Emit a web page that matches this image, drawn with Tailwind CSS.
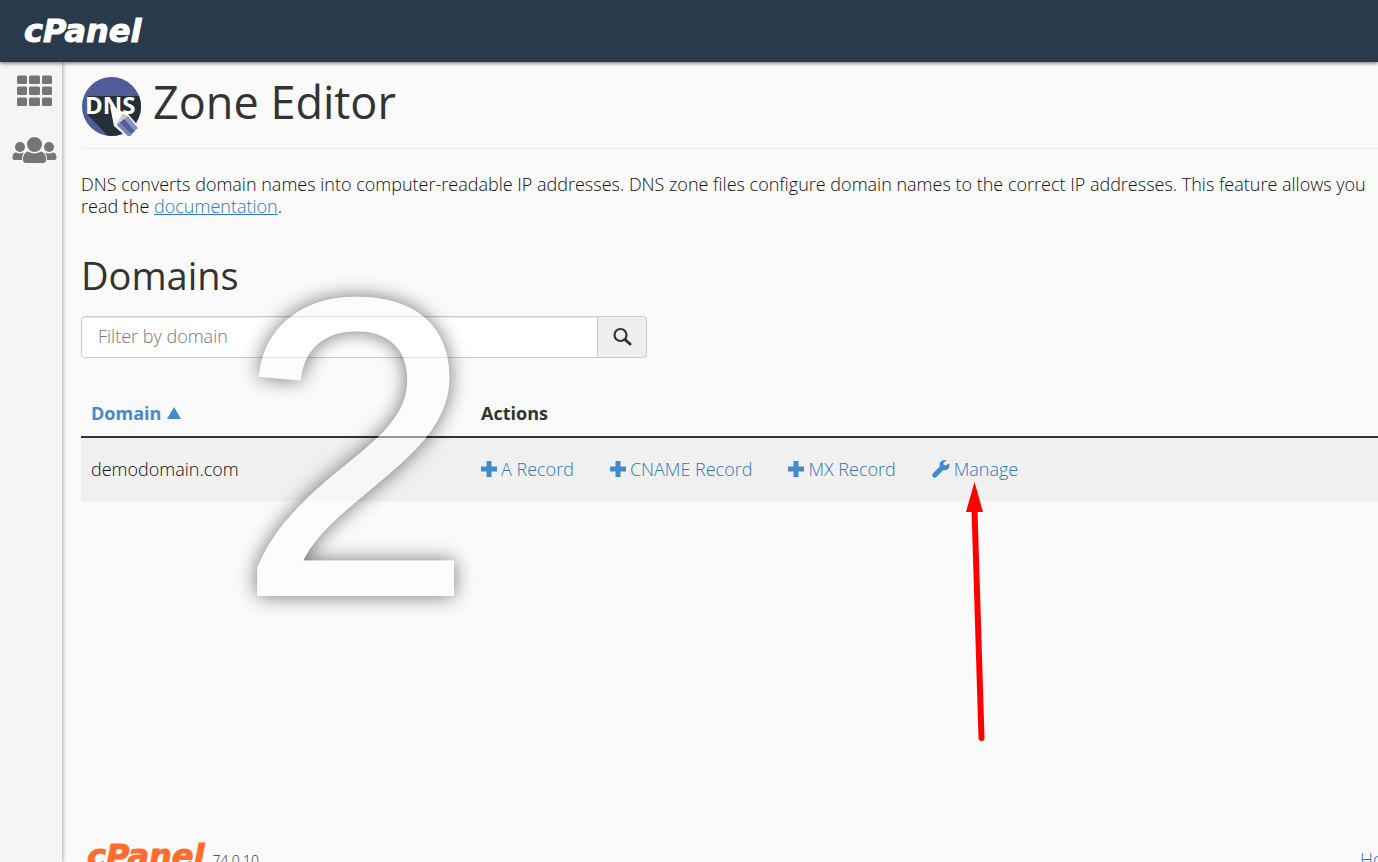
<!DOCTYPE html>
<html lang="en">
<head>
    <meta charset="UTF-8">
    <meta name="viewport" content="width=device-width, initial-scale=1.0">
    <title>cPanel - Zone Editor</title>
    <script src="https://cdn.jsdelivr.net/npm/@tailwindcss/browser@4"></script>
</head>
<body class="h-screen overflow-hidden bg-[#fafafa] text-[#111] text-[18px] leading-[22px] font-light font-['Open_Sans',sans-serif] relative flex flex-col">
    <!-- Top bar -->
    <header class="h-[62px] shrink-0 bg-[#293a4a] flex items-center px-6 shadow-[0_1px_4px_rgba(0,0,0,0.6)] z-10">
        <a href="#" class="text-white text-[32px] leading-none font-bold italic font-['DejaVu_Sans',sans-serif] [-webkit-text-stroke:1px]">cPanel</a>
    </header>

    <div class="flex grow min-h-0">
        <!-- Sidebar -->
        <nav class="w-[62px] shrink-0 bg-[#f5f5f5] shadow-[0_0_5px_rgba(0,0,0,0.45)] flex flex-col pt-3 pl-3 gap-7">
            <a href="#" aria-label="Home" class="text-[#757575]">
                <svg class="w-[45px] h-[34px]" viewBox="0 0 45 34" fill="currentColor">
                    <rect x="5" y="1.500" width="10" height="8.500" rx="1.500"/><rect x="17" y="1.500" width="11" height="8.500" rx="1.500"/><rect x="30" y="1.500" width="10" height="8.500" rx="1.500"/>
                    <rect x="5" y="12.500" width="10" height="8.500" rx="1.500"/><rect x="17" y="12.500" width="11" height="8.500" rx="1.500"/><rect x="30" y="12.500" width="10" height="8.500" rx="1.500"/>
                    <rect x="5" y="23.500" width="10" height="8.500" rx="1.500"/><rect x="17" y="23.500" width="11" height="8.500" rx="1.500"/><rect x="30" y="23.500" width="10" height="8.500" rx="1.500"/>
                </svg>
            </a>
            <a href="#" aria-label="User Manager" class="text-[#757575]">
                <svg class="w-[45px] h-7" viewBox="0 0 45 28" fill="currentColor">
                    <circle cx="8" cy="11" r="5"/>
                    <circle cx="37" cy="11" r="5"/>
                    <circle cx="22.500" cy="8.500" r="7.500"/>
                    <path d="M4 16.500q4 2 8 0q-2 2-2 7.500H2.500Q.5 24 .5 22Q.5 16.500 4 16.500z"/>
                    <path d="M41 16.500q-4 2-8 0q2 2 2 7.500h7.500q2 0 2-2q0-5.500-3.500-5.500z"/>
                    <path d="M16 15.500q6.500 4 13 0q5 1 5 8.500q0 3-3 3H14q-3 0-3-3q0-7.500 5-8.500z"/>
                </svg>
            </a>
        </nav>

        <main class="grow min-w-0 pl-[19px] pt-[14px] flex flex-col">
            <div class="flex items-start gap-3 h-[73px] shrink-0 border-b border-[#eee]">
                <svg class="w-[60px] h-[60px] shrink-0" viewBox="0 0 60 60">
                    <defs><clipPath id="disc"><circle cx="30.500" cy="30.500" r="29.500"/></clipPath></defs>
                    <g clip-path="url(#disc)">
                        <rect width="60" height="60" fill="#505b98"/>
                        <path d="M7 20h53v40H27L6 38z" fill="#243038"/>
                    </g>
                    <text x="4" y="38" font-size="24" font-weight="700" fill="#fff">DNS</text>
                    <path d="M29 30l18 8 13 15-12 10-15-13z" fill="#fafafa"/>
                    <path d="M35 38h8l5 3-11 9-2-3z" fill="#c9c9c9"/>
                    <path d="M35 38l3-1 3 1-3 6-3 4z" fill="#fff"/>
                    <path d="M36 49l11-9 10 12-9 9z" fill="#8a94c9"/>
                    <path d="M38.500 47l5-4 10 12-4 3z" fill="#515c99"/>
                    <path d="M36 49l3-2.500 12 12-3 2.500z" fill="#7681be"/>
                </svg>
                <h1 class="text-[45px] leading-[52px] font-normal text-[#333]">Zone Editor</h1>
            </div>

            <p class="mt-6 whitespace-nowrap">DNS converts domain names into computer-readable IP addresses. DNS zone files configure domain names to the correct IP addresses. This feature allows you<br>read the <a href="#" class="text-[#2f78bb] underline">documentation</a>.</p>

            <h2 class="mt-9 text-[38px] leading-[44px] font-normal text-[#333]">Domains</h2>

            <form class="mt-[19px] flex w-[566px] h-[42px] shrink-0">
                <input type="text" aria-label="Filter by domain" placeholder="Filter by domain" class="grow min-w-0 bg-white border border-[#ccc] rounded-l px-4 pb-[2px] placeholder:text-[#777] shadow-[inset_0_1px_1px_rgba(0,0,0,0.075)]">
                <button type="button" aria-label="Search" class="w-[49px] bg-[#eee] border border-l-0 border-[#ccc] rounded-r flex items-center justify-center">
                    <svg class="w-5 h-5" viewBox="0 0 20 20" fill="none" stroke="#333">
                        <circle cx="8.500" cy="8" r="6" stroke-width="2.200"/>
                        <path d="M13 12.500l5 4.500" stroke-width="3" stroke-linecap="round"/>
                    </svg>
                </button>
            </form>

            <table class="mt-[31px] w-full text-left table-fixed">
                <thead>
                    <tr class="h-12 border-b-2 border-[#333]">
                        <th class="w-[390px] px-[10px] font-bold text-[#428bca]"><a href="#" class="flex items-center gap-[6px]">Domain <svg class="w-[14px] h-3" viewBox="0 0 14 12" fill="currentColor"><path d="M7 0l7 12H0z"/></svg></a></th>
                        <th class="px-[10px] font-bold text-[#333]">Actions</th>
                    </tr>
                </thead>
                <tbody>
                    <tr class="h-16 bg-[#f0f0f0]">
                        <td class="px-[10px] pb-[2px]">demodomain.com</td>
                        <td class="px-[10px] pb-[2px]">
                            <div class="flex gap-9 text-[#2f78bb]">
                                <button class="flex items-center gap-1"><svg class="w-4 h-4 text-[#428bca]" viewBox="0 0 16 16" fill="currentColor"><path d="M5.500 0h5v5.500H16v5h-5.500V16h-5v-5.500H0v-5h5.500z"/></svg>A Record</button>
                                <button class="flex items-center gap-1"><svg class="w-4 h-4 text-[#428bca]" viewBox="0 0 16 16" fill="currentColor"><path d="M5.500 0h5v5.500H16v5h-5.500V16h-5v-5.500H0v-5h5.500z"/></svg>CNAME Record</button>
                                <button class="flex items-center gap-1"><svg class="w-4 h-4 text-[#428bca]" viewBox="0 0 16 16" fill="currentColor"><path d="M5.500 0h5v5.500H16v5h-5.500V16h-5v-5.500H0v-5h5.500z"/></svg>MX Record</button>
                                <button class="flex items-center gap-1"><svg class="w-[18px] h-[18px] text-[#428bca]" viewBox="0 0 18 18" fill="currentColor"><path d="M17 3.500l-3.500 2-2-1V2.500L15 .5Q10.500-.8 8.300 2.300Q7.200 4 7.800 6.500L.8 13.500Q-.5 15.500 1 17q1.600 1.300 3.400 0l7-7q3 .7 5-1.400Q18.200 6.500 17 3.500z"/></svg>Manage</button>
                            </div>
                        </td>
                    </tr>
                </tbody>
            </table>

            <!-- Footer -->
            <footer class="mt-auto -mb-3 h-8 shrink-0 flex items-start justify-between pl-[6px]">
                <div class="flex items-start gap-2">
                    <a href="#" class="text-[#ff6c2c] text-[32px] leading-7 font-bold italic font-['DejaVu_Sans',sans-serif] [-webkit-text-stroke:1px]">cPanel</a>
                    <span class="pt-2 text-[14px] text-[#333]">74.0.10</span>
                </div>
                <a href="#" class="w-[18px] pt-[6px] whitespace-nowrap text-[#2f78bb]">Home</a>
            </footer>
        </main>
    </div>

    <!-- Step number and pointer drawn over the page -->
    <svg class="absolute left-[215px] top-[250px] w-[280px] h-[400px] pointer-events-none z-20" viewBox="0 0 280 400">
        <defs>
            <filter id="halo" x="-20%" y="-20%" width="140%" height="140%" color-interpolation-filters="sRGB">
                <feGaussianBlur in="SourceAlpha" stdDeviation="10" result="blur"/>
                <feComposite in="blur" in2="SourceAlpha" operator="out" result="ring"/>
                <feComponentTransfer in="ring" result="shade"><feFuncA type="linear" slope="0.550"/></feComponentTransfer>
                <feComponentTransfer in="SourceGraphic" result="face"><feFuncA type="linear" slope="0.500"/></feComponentTransfer>
                <feMerge><feMergeNode in="shade"/><feMergeNode in="face"/></feMerge>
            </filter>
        </defs>
        <text x="23" y="344" font-size="423" font-weight="400" fill="#fff" stroke="#fff" stroke-width="4" filter="url(#halo)" class="font-['Liberation_Sans',sans-serif]">2</text>
    </svg>
    <svg class="absolute left-[960px] top-[480px] w-10 h-[270px] pointer-events-none z-20" viewBox="0 0 40 270">
        <path d="M14.500 2L23 32H6z" fill="#f00"/>
        <path d="M14.500 30L21.500 258" stroke="#f00" stroke-width="6" stroke-linecap="round"/>
    </svg>
</body>
</html>
